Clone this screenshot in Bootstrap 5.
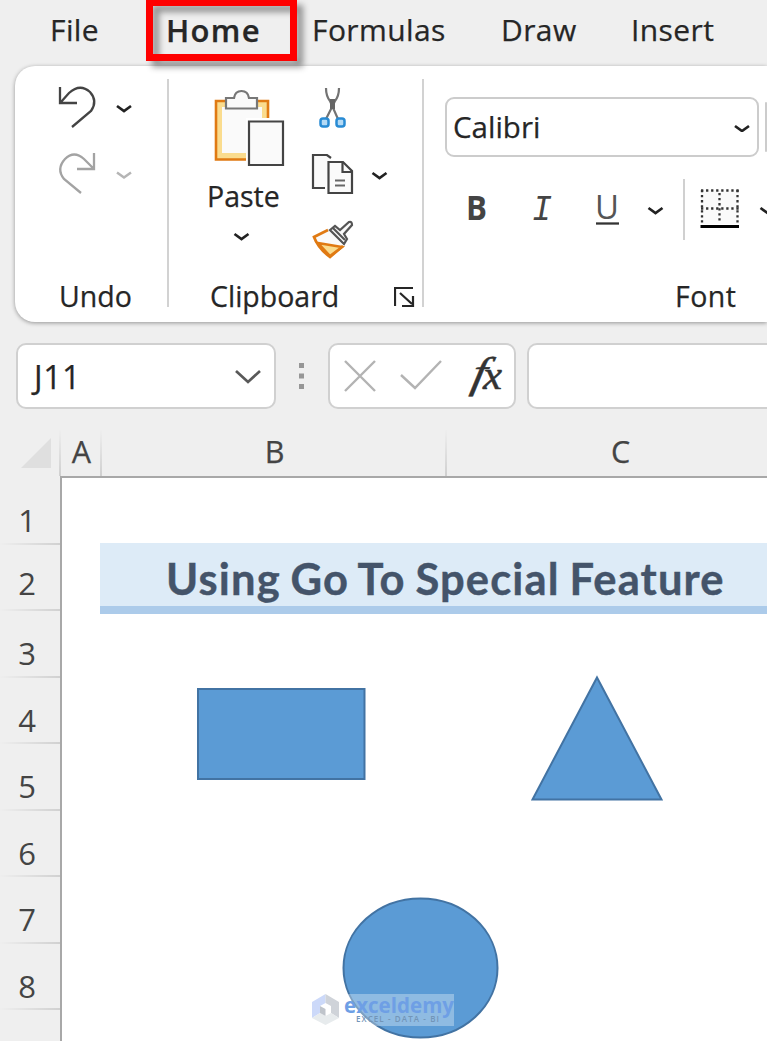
<!DOCTYPE html>
<html lang="en">
<head>
<meta charset="utf-8">
<meta name="viewport" content="width=device-width, initial-scale=1">
<title>Workbook</title>
<link rel="stylesheet" href="https://cdn.jsdelivr.net/npm/bootstrap@5.3.0/dist/css/bootstrap.min.css">
<style>
body{background:#efefef;height:1041px;overflow:hidden;font-family:"Open Sans","Noto Sans",sans-serif;color:#262626;white-space:nowrap;-webkit-text-stroke:.25px}
svg{display:block;flex:none;overflow:hidden}
svg text{-webkit-text-stroke:0}
.tabs{height:66px;padding-left:50px;font-size:30px;line-height:60px;letter-spacing:.4px}
.tabs .tab{flex:none;color:inherit;text-decoration:none;height:60px}
.tab-file{width:116px}.tab-home{width:146px;font-weight:600;font-size:31px;letter-spacing:1.3px;color:#3a3a3a}.tab-formulas{width:189px}.tab-draw{width:130px}
.marker{position:absolute;left:-20px;top:-1px;width:151px;height:62px;border:7.5px solid #fe0000;filter:drop-shadow(6px 6px 3px rgba(0,0,0,.4))}
.ribbon{margin-left:15px;height:256px;background:#fff;border-radius:20px 0 0 20px;box-shadow:0 1px 4px rgba(0,0,0,.38);padding-top:13px}
.grp{flex:none;height:228px}
.grp-undo{width:154px;border-right:2px solid #d2d2d2}
.grp-clip{width:255px;border-right:2px solid #d2d2d2}
.grp-font{width:343px;overflow:hidden;height:236px}
.caption{font-size:28.5px;line-height:38px;height:38px}
.drop{margin-bottom:-8px}
.paste-col{width:88px;margin-left:35px}
.paste-txt{font-size:28.500px;line-height:52px;height:52px}
.fontbox{width:314px;height:60px;border:2px solid #ccc;border-radius:9px;font-size:29.5px;margin-left:21px;margin-top:18px;padding:0 7px 0 6px}
.sizebox{width:2px;height:50px;background:#ccc;border-radius:2px;margin-left:6px;margin-top:23px}
.fbar{height:66px;margin-top:21px;padding-left:16px}
.box{flex:none;height:66px;background:#fff;border:2px solid #d0d0d0;border-radius:10px}
.formula{border-right:0;border-radius:10px 0 0 10px;margin-left:11px}
.namebox{width:260px;font-size:32px;line-height:60px;padding:2px 13px 0 16px;letter-spacing:.6px}
.colhead{height:46px;margin-top:21px;font-size:30.500px;color:#444}
.colhead .hd{flex:none;text-align:center;line-height:43px;padding-left:2px;border-right:2px solid;border-image:linear-gradient(#efefef,#cfcfcf) 1}
.hd0{width:61px}.hd1{width:41px}.hd2{width:345px}
.colhead .hd3{width:320px;padding-right:0;padding-left:27px;border:0}
.rows{width:62px;flex:none;margin-top:2px}
.rows .rw{height:66.5px;line-height:84px;font-size:31px;color:#444;padding-right:8px;text-align:center;border-bottom:2px solid;border-image:linear-gradient(90deg,#efefef,#cfcfcf) 1;-webkit-text-stroke:0}
.sheet{background:#fff;border-top:2px solid #a8a8a8;border-left:2px solid #a8a8a8;margin-left:-2px}
.banner{margin:65px 0 0 38px;height:71px;background:#ddebf7;border-bottom:8px solid #accbea;color:#44546a;font:700 43.5px/70px Lato,sans-serif;padding-left:66px;letter-spacing:1.15px;word-spacing:-2px;-webkit-text-stroke:.4px}
.shapes{position:absolute;left:0;top:0}
</style>
</head>
<body class="d-flex flex-column">
<nav class="tabs d-flex flex-nowrap">
  <a class="tab tab-file">File</a>
  <a class="tab tab-home position-relative"><span class="marker"></span><span class="position-relative">Home</span></a>
  <a class="tab tab-formulas">Formulas</a><a class="tab tab-draw">Draw</a><a class="tab">Insert</a>
</nav>

<section class="ribbon d-flex flex-shrink-0">
  <div class="grp grp-undo d-flex flex-column">
    <svg width="152" height="120" viewBox="15 79 152 120" fill="none" stroke="#444" stroke-width="2.3">
      <path d="M60 87v16h17M61 102L69 93Q80 83 90 92Q98 101 91 111L72 127"/>
      <path d="M117 106l7 5 7-5" stroke="#222" stroke-width="2.7"/>
      <path stroke="#a3a3a3" d="M94 153v16H77M93 168L84 159Q74 150 65 159Q56 169 64 179L81 193"/>
      <path d="M117 172.500l7 5 7-5" stroke="#b5b5b5" stroke-width="2.5"/>
    </svg>
    <div class="caption drop mt-auto" style="padding-left:44px">Undo</div>
  </div>
  <div class="grp grp-clip d-flex flex-column">
    <div class="d-flex">
      <div class="paste-col">
        <svg width="88" height="91" viewBox="204 79 88 91" stroke-width="2.2">
          <path d="M216 101H268V159.500H216Z" fill="#fadc8e" stroke="#e07a13" stroke-width="2.6"/>
          <path d="M222 107h40v46h-40z" fill="#fafafa"/>
          <path d="M226 108.500V98H234Q235 91 241.500 91Q248 91 249 98H257V108.500Z" fill="#fafafa" stroke="#777"/>
          <path d="M246 118h42v50h-42z" fill="#fff"/>
          <path d="M249 121.500h34v43.500h-34z" fill="#fafafa" stroke="#444"/>
        </svg>
        <div class="paste-txt" style="padding-left:3px">Paste</div>
        <svg width="88" height="30" viewBox="204 222 88 30" fill="none"><path d="M234.500 234l7 5 7-5" stroke="#222" stroke-width="2.7"/></svg>
      </div>
      <svg width="100" height="186" viewBox="292 79 100 186" fill="none" stroke="#444" stroke-width="2.2">
        <path d="M326 88Q326 96 330 101L338 119M339 88Q339 96 335 101L326 119" stroke="#737373" stroke-width="2.2"/>
        <path d="M330 99h5v10h-5z" fill="#666" stroke="none"/>
        <g fill="#b4daf5" stroke="#288bd4" stroke-width="2.5"><rect x="320.500" y="118.500" width="8" height="8" rx="2.500"/><rect x="336.500" y="118.500" width="8" height="8" rx="2.500"/></g>
        <path d="M325 188H313V155H327L331 158" fill="#fafafa"/>
        <path d="M328.500 162H343L352 171V193H328.500Z" fill="#fafafa"/><path d="M342.500 162v10H352"/><path d="M335 180.500h10M335 185.500h10" stroke="#666"/>
        <path d="M372.500 173l7 5 7-5" stroke="#222" stroke-width="2.7"/>
        <path d="M328 230L314 237Q318 248 330 257L343 246" fill="#fafafa" stroke="#e07a13" stroke-width="2.7"/>
        <path d="M318 243L342 247L330 256Z" fill="#fadc8e" stroke="#e07a13" stroke-width="2.500"/>
        <path d="M330 230L335 226L340 230L349 222Q352 221 352 225L344 234L347 239L344 244Z" fill="#fafafa" stroke="#555"/><path d="M333 228l12 12" stroke="#555"/>
      </svg>
    </div>
    <div class="d-flex mt-auto drop">
      <div class="caption" style="padding-left:41px;width:225px">Clipboard</div>
      <svg width="24" height="38" viewBox="394 277 24 38" fill="none" stroke="#262626" stroke-width="2.2"><path d="M395 306V288H413M400 293l12 11M413 296v10h-11"/></svg>
    </div>
  </div>
  <div class="grp grp-font d-flex flex-column">
    <div class="d-flex">
      <div class="fontbox d-flex align-items-center flex-shrink-0"><span>Calibri</span>
        <svg class="ms-auto" width="16" height="10" viewBox="735 122 16 10" fill="none"><path d="M736 126l7 5 7-5" stroke="#222" stroke-width="2.700"/></svg></div>
      <div class="sizebox flex-shrink-0"></div>
    </div>
    <svg style="margin-top:13px" width="343" height="80" viewBox="424 170 343 80" fill="none">
      <text x="466" y="220" font-family="Open Sans" font-weight="700" font-size="34" fill="#444" textLength="21" lengthAdjust="spacingAndGlyphs">B</text>
      <text x="532" y="220" font-family="Liberation Mono" font-style="italic" font-size="37" fill="#444" textLength="20" lengthAdjust="spacingAndGlyphs">I</text>
      <text x="595" y="219" font-family="Open Sans" font-size="33" fill="#555" textLength="24" lengthAdjust="spacingAndGlyphs">U</text>
      <path d="M596 223.500h23" stroke="#333" stroke-width="2.300"/>
      <path d="M648.500 208l7 5 7-5M760.500 208l7 5 7-5" stroke="#222" stroke-width="2.700"/>
      <path d="M684 179v61" stroke="#d0d0d0" stroke-width="2"/>
      <path d="M701 190h38v34h-38z" fill="#fafafa"/>
      <path d="M701 190.500h38M701 208.500h38" stroke="#333" stroke-width="2.300" stroke-dasharray="2.300 2.750"/>
      <path d="M702 190v33M719.500 193v30M737.500 190v33" stroke="#333" stroke-width="2.300" stroke-dasharray="2.300 2.750"/>
      <path d="M700.500 226.500h38.500" stroke="#000" stroke-width="2.800"/>
    </svg>
    <div class="caption mt-auto" style="padding-left:251px;letter-spacing:.5px">Font</div>
  </div>
</section>

<section class="fbar d-flex flex-shrink-0">
  <div class="box namebox d-flex align-items-center"><span>J11</span><svg class="ms-auto" width="26" height="14" viewBox="0 0 26 14" fill="none" stroke="#595959" stroke-width="2.700"><path d="M1 1l12 11L25 1"/></svg></div>
  <svg width="52" height="66" viewBox="276 343 52 66" fill="#969696"><path d="M299 363h5v5h-5zM299 373.500h5v5h-5zM299 384h5v5h-5z"/></svg>
  <div class="box" style="width:188px"><svg width="184" height="62" viewBox="330 345 184 62" fill="none" stroke="#b3b3b3" stroke-width="2.400"><path d="M345 361l30 30M375 361l-30 30M401 375l14 13 26-27"/>
    <g stroke="#333" stroke-width=".5" fill="#333" font-family="Liberation Serif" font-style="italic"><text transform="translate(470 387) skewX(-12)" font-size="43" textLength="14" lengthAdjust="spacingAndGlyphs">f</text><text x="483" y="389" font-size="39" textLength="19" lengthAdjust="spacingAndGlyphs">x</text></g></svg></div>
  <div class="box formula" style="width:240px"></div>
</section>

<section class="colhead d-flex flex-shrink-0">
  <div class="hd hd0 p-0"><svg width="59" height="46" viewBox="0 430 59 46"><path d="M51 438v30H21z" fill="#dfdfdf"/></svg></div>
  <div class="hd hd1">A</div><div class="hd hd2">B</div><div class="hd hd3">C</div>
</section>

<main class="d-flex flex-grow-1">
  <div class="rows">
    <div class="rw">1</div><div class="rw" style="line-height:77px">2</div><div class="rw">3</div><div class="rw">4</div><div class="rw">5</div><div class="rw">6</div><div class="rw">7</div><div class="rw">8</div>
  </div>
  <div class="sheet flex-grow-1 position-relative">
    <div class="banner"><span>Using Go To Special Feature</span></div>
    <svg class="shapes" width="705" height="563" viewBox="62 478 705 563" stroke="#4273a3" stroke-width="2" fill="#5b9bd5">
      <path d="M198 689h166.500v90H198z"/>
      <path d="M597 677.500L661.500 799.500H532.500Z"/>
      <ellipse cx="420.500" cy="968" rx="77" ry="69.500"/>
      <g stroke="none">
        <path d="M343 994h111v32H343z" fill="#fff" opacity=".32"/>
        <path d="M325.500 994L312 1002V1018L320 1013V1006L325.500 1003Z" fill="#ccd9f9"/>
        <path d="M325.500 994L339 1002V1018L331 1013V1006L325.500 1003Z" fill="#cfd3d9"/>
        <path d="M312 1018L320 1013L325.500 1016L331 1013L339 1018L325.500 1025Z" fill="#e7ebed"/>
        <path d="M320 1006l5.500 3v7l-5.500-3z" fill="#bfc4cb"/>
        <text x="344" y="1012.500" font-family="Open Sans" font-weight="700" font-size="22" fill="#6e9fe5" textLength="110" lengthAdjust="spacingAndGlyphs">exceldemy</text>
        <text x="356" y="1022" font-family="Open Sans" font-weight="600" font-size="8" fill="#7295b8" textLength="83">EXCEL - DATA - BI</text>
      </g>
    </svg>
  </div>
</main>
<script src="https://cdn.jsdelivr.net/npm/bootstrap@5.3.0/dist/js/bootstrap.bundle.min.js"></script>
</body>
</html>
